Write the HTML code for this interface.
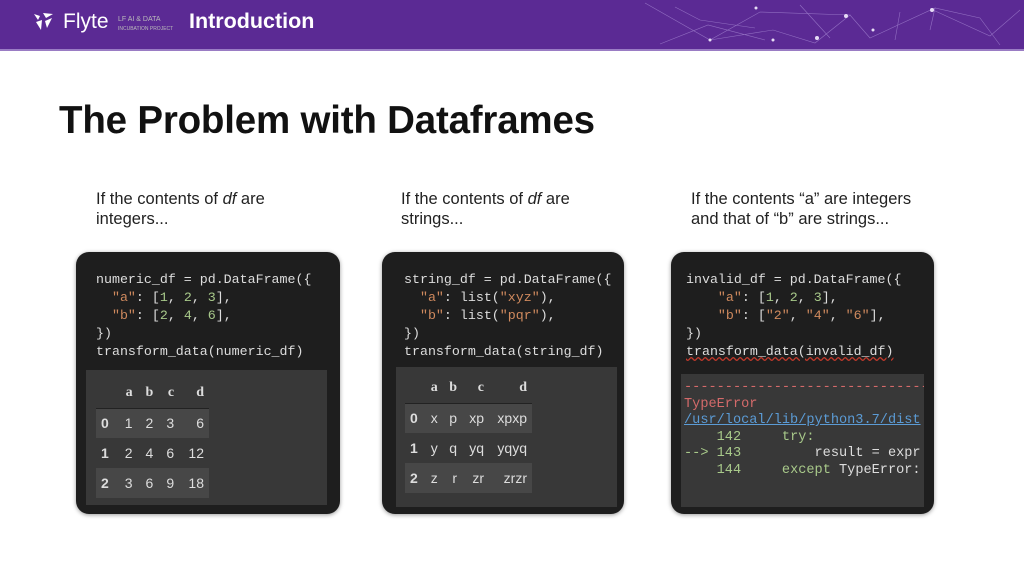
<!DOCTYPE html>
<html><head><style>
*{margin:0;padding:0;box-sizing:border-box}
body{width:1024px;height:563px;background:#fff;position:relative;overflow:hidden;font-family:"Liberation Sans",sans-serif}
.hdr{position:absolute;left:0;top:0;width:1024px;height:50px;background:#5b2a94}
.hdr .line{position:absolute;left:0;top:49px;width:1024px;height:2px;background:#9a7cc4}
.abs{position:absolute}
.title{left:59px;top:99px;font-size:38.5px;font-weight:bold;color:#111;letter-spacing:-0.2px}
.cap{font-size:16.5px;line-height:20px;color:#222}
.card{position:absolute;top:252px;height:262px;background:#1e1e1e;border-radius:13px;box-shadow:0 1px 4px rgba(0,0,0,.4)}
.code{position:absolute;font-family:"Liberation Mono",monospace;font-size:13.3px;line-height:18px;color:#ddd;white-space:pre}
.s{color:#d08a5e}.n{color:#a8c98a}
.out{position:absolute;background:#383838}
table{position:absolute;border-collapse:collapse;font-size:14px;color:#ddd}
td{height:30px;padding:0 5px;text-align:right}
tr.h td{font-family:"Liberation Serif",serif;font-weight:bold;height:30px;border-bottom:1px solid #222}
tr.g td{background:#474747}
td.i{font-weight:bold;text-align:left}
</style></head><body>
<div class="hdr"><div class="line"></div>
<svg class="abs" style="left:33px;top:12px" width="22" height="20" viewBox="0 0 22 20"><path d="M1 2 L7 4 L5 8 Z M10 1 L20 2 L13 6 Z M3 10 L9 8 L8 18 Z M12 9 L19 6 L14 16 Z" fill="#fff"/></svg>
<div class="abs" style="left:63px;top:10px;font-size:21px;color:#fff">Flyte</div>
<div class="abs" style="left:118px;top:15px;font-size:7px;color:#bbb;line-height:9px">LF AI &amp; DATA<br><span style="font-size:5px">INCUBATION PROJECT</span></div>
<div class="abs" style="left:189px;top:9px;font-size:21.5px;font-weight:bold;color:#fff">Introduction</div>
<svg class="abs" style="left:600px;top:0" width="424" height="50"><g stroke="#a98bd6" stroke-width=".6" opacity=".7" fill="none"><path d="M45 3 L110 40 L160 12 L250 15 L215 43 L173 30 L110 40 M75 7 L100 20 L155 28 M250 15 L270 38 L335 8 L330 30 M270 38 L335 8 L380 18 L400 45 M60 44 L108 25 L165 40 M200 5 L230 38 M300 12 L295 40 M333 10 L390 36 L420 10"/></g><g fill="#e6dcf5"><circle cx="246" cy="16" r="2"/><circle cx="217" cy="38" r="2"/><circle cx="173" cy="40" r="1.5"/><circle cx="110" cy="40" r="1.5"/><circle cx="332" cy="10" r="2"/><circle cx="273" cy="30" r="1.5"/><circle cx="156" cy="8" r="1.5"/></g></svg>
</div>
<div class="abs title">The Problem with Dataframes</div>
<div class="abs cap" style="left:96px;top:189px">If the contents of <i>df</i> are<br>integers...</div>
<div class="abs cap" style="left:401px;top:189px">If the contents of <i>df</i> are<br>strings...</div>
<div class="abs cap" style="left:691px;top:189px">If the contents “a” are integers<br>and that of “b” are strings...</div>

<div class="card" style="left:76px;width:264px">
<div class="code" style="left:20px;top:19px">numeric_df = pd.DataFrame({
  <span class="s">"a"</span>: [<span class="n">1</span>, <span class="n">2</span>, <span class="n">3</span>],
  <span class="s">"b"</span>: [<span class="n">2</span>, <span class="n">4</span>, <span class="n">6</span>],
})
transform_data(numeric_df)</div>
<div class="out" style="left:10px;top:118px;width:241px;height:135px"></div>
<table style="left:20px;top:126px;width:113px"><tr class="h"><td></td><td>a</td><td>b</td><td>c</td><td>d</td></tr>
<tr class="g"><td class="i">0</td><td>1</td><td>2</td><td>3</td><td>6</td></tr>
<tr><td class="i">1</td><td>2</td><td>4</td><td>6</td><td>12</td></tr>
<tr class="g"><td class="i">2</td><td>3</td><td>6</td><td>9</td><td>18</td></tr></table>
</div>

<div class="card" style="left:382px;width:242px">
<div class="code" style="left:22px;top:19px">string_df = pd.DataFrame({
  <span class="s">"a"</span>: list(<span class="s">"xyz"</span>),
  <span class="s">"b"</span>: list(<span class="s">"pqr"</span>),
})
transform_data(string_df)</div>
<div class="out" style="left:14px;top:115px;width:221px;height:140px"></div>
<table style="left:23px;top:121px;width:127px"><tr class="h"><td></td><td>a</td><td>b</td><td>c</td><td>d</td></tr>
<tr class="g"><td class="i">0</td><td>x</td><td>p</td><td>xp</td><td>xpxp</td></tr>
<tr><td class="i">1</td><td>y</td><td>q</td><td>yq</td><td>yqyq</td></tr>
<tr class="g"><td class="i">2</td><td>z</td><td>r</td><td>zr</td><td>zrzr</td></tr></table>
</div>

<div class="card" style="left:671px;width:263px;overflow:hidden">
<div class="code" style="left:15px;top:19px">invalid_df = pd.DataFrame({
    <span class="s">"a"</span>: [<span class="n">1</span>, <span class="n">2</span>, <span class="n">3</span>],
    <span class="s">"b"</span>: [<span class="s">"2"</span>, <span class="s">"4"</span>, <span class="s">"6"</span>],
})
<span style="text-decoration:underline wavy #c0392b">transform_data(invalid_df)</span></div>
<div class="out" style="left:10px;top:122px;width:243px;height:133px;overflow:hidden">
<div class="code" style="left:3px;top:6px;line-height:16.5px;font-size:13.6px"><span style="color:#d46a6a">------------------------------------
TypeError</span>
<span style="color:#5b9bd5;text-decoration:underline">/usr/local/lib/python3.7/dist</span>
<span class="n">    142</span>     <span class="n">try:</span>
<span class="n">--&gt; 143</span>         result = expr
<span class="n">    144</span>     <span class="n">except</span> TypeError:</div></div>
</div>
</body></html>
